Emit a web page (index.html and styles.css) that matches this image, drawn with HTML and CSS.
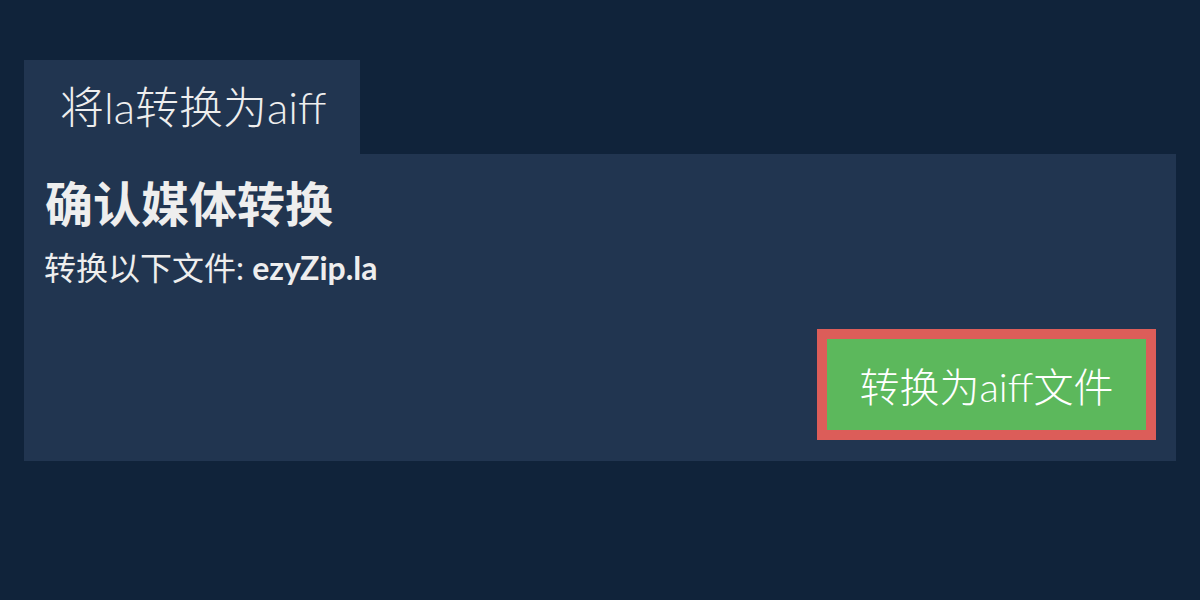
FILE: index.html
```html
<!DOCTYPE html>
<html lang="zh-CN">
<head>
    <meta charset="UTF-8">
    <meta name="viewport" content="width=device-width, initial-scale=1.0">
    <title>将la转换为aiff</title>
    <link rel="stylesheet" href="styles.css">
</head>
<body>
    <div class="tab">将la转换为aiff</div>
    <div class="panel">
        <h2>确认媒体转换</h2>
        <div class="file-line">转换以下文件: <b>ezyZip.la</b></div>
        <div class="actions">
            <button class="convert-btn" type="button">转换为aiff文件</button>
        </div>
    </div>
</body>
</html>
```

FILE: styles.css
```css
body {
    font-family: Lato, "Noto Sans CJK SC", sans-serif;
    background-color: #10233a;
    color: #eeeeee;
    margin: 0;
    padding: 60px 24px;
}
.tab {
    display: inline-block;
    background-color: #213550;
    font-size: 44px;
    font-weight: 300;
    line-height: 94px;
    height: 94px;
    padding: 0 34px 0 36px;
}
.panel {
    background-color: #213550;
    padding: 20px 20px 21px;
}
h2 {
    font-size: 48px;
    font-weight: 700;
    line-height: 60px;
    margin: 0 0 0 1px;
}
.file-line {
    font-size: 32px;
    line-height: 40px;
    margin: 14px 0 0 0;
}
.file-line b {
    font-weight: 700;
}
.actions {
    display: flex;
    justify-content: flex-end;
    margin-top: 41px;
}
.convert-btn {
    font-family: inherit;
    font-size: 40px;
    font-weight: 300;
    color: #ffffff;
    background-color: #5cb85c;
    border: 10px solid #dc5d59;
    width: 339px;
    height: 111px;
    padding: 0;
    cursor: pointer;
}
```
